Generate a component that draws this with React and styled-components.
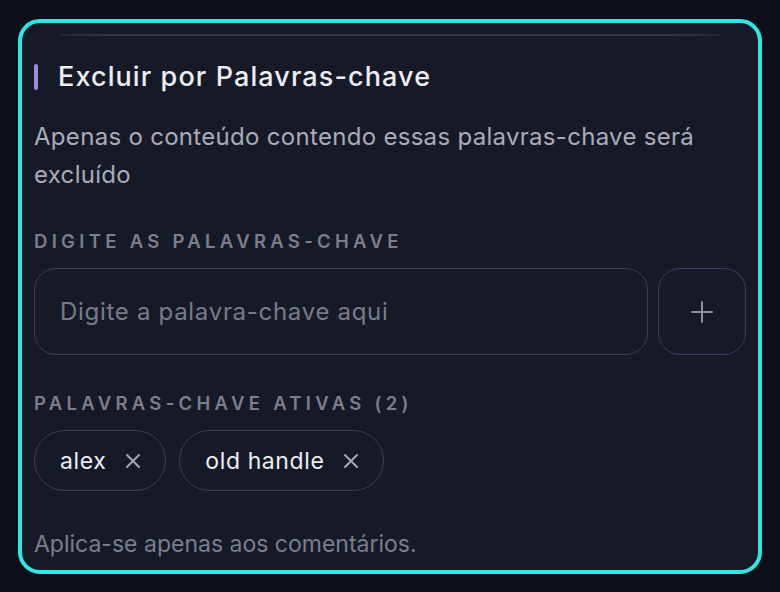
import React from 'react';
import styled, { createGlobalStyle } from 'styled-components';

const GlobalStyle = createGlobalStyle`
  html, body {
    margin: 0;
    padding: 0;
    background: #0c0f17;
  }
  body {
    font-family: Inter, "Noto Sans", "Liberation Sans", sans-serif;
    -webkit-font-smoothing: antialiased;
  }
`;

const Page = styled.div`
  width: 780px;
  height: 592px;
  padding: 19px 18px 0;
  box-sizing: border-box;
`;

const Card = styled.section`
  height: 555px;
  box-sizing: border-box;
  border: 4px solid #2ee6e6;
  border-radius: 22px;
  background: #161a27;
  padding: 11px 12px 0;
  display: flex;
  flex-direction: column;
`;

const Divider = styled.div`
  height: 2px;
  margin: 0 26px;
  background: linear-gradient(90deg, #242836 0%, #343846 8%, #343846 92%, #242836 100%);
`;

const TitleRow = styled.div`
  display: flex;
  align-items: center;
  gap: 20px;
  margin-top: 25px;
  height: 32px;
`;

const Accent = styled.span`
  width: 4px;
  height: 26px;
  border-radius: 2px;
  background: #9b8ade;
`;

const Title = styled.h2`
  margin: 0;
  font-size: 27px;
  line-height: 32px;
  font-weight: 500;
  letter-spacing: 1.1px;
  color: #eceef5;
`;

const Description = styled.p`
  margin: 25px 0 0;
  font-size: 24px;
  line-height: 38px;
  letter-spacing: 0.3px;
  color: #a9acb9;
`;

const Label = styled.div`
  margin-top: ${props => props.$top}px;
  font-size: 18.5px;
  line-height: 20px;
  font-weight: 600;
  letter-spacing: 4.3px;
  text-transform: uppercase;
  color: #7b7e8d;
`;

const InputRow = styled.div`
  display: flex;
  gap: 10px;
  margin-top: 17px;
`;

const Input = styled.input`
  flex: 1;
  height: 87px;
  box-sizing: border-box;
  border: 1.5px solid #3b3e4b;
  border-radius: 22px;
  background: transparent;
  padding: 0 25px;
  font-family: inherit;
  font-size: 24px;
  letter-spacing: 0.7px;
  color: #e6e8f0;
  outline: none;

  &::placeholder {
    color: #787b89;
  }
`;

const AddButton = styled.button`
  width: 88px;
  height: 87px;
  box-sizing: border-box;
  border: 1.5px solid #3d3866;
  border-radius: 22px;
  background: transparent;
  display: flex;
  align-items: center;
  justify-content: center;
  color: #8d8fa0;
  cursor: pointer;
`;

const Chips = styled.div`
  display: flex;
  gap: 13px;
  margin-top: 17px;
`;

const Chip = styled.div`
  height: 61px;
  box-sizing: border-box;
  border: 1.5px solid #3b3e4b;
  border-radius: 31px;
  padding: 0 24px 0 25px;
  display: flex;
  align-items: center;
  gap: 19px;
  font-size: 23px;
  letter-spacing: 0.6px;
  color: #eceef5;
`;

const RemoveIcon = styled.svg`
  color: #a3a6b4;
  cursor: pointer;
`;

const Footer = styled.div`
  margin-top: 41px;
  font-size: 23px;
  line-height: 24px;
  color: #7b7e8d;
`;

const PlusIcon = () => (
  <svg width="22" height="22" viewBox="0 0 22 22" fill="none">
    <path d="M11 1v20M1 11h20" stroke="currentColor" strokeWidth="2" strokeLinecap="round" />
  </svg>
);

const XIcon = () => (
  <RemoveIcon width="16" height="16" viewBox="0 0 16 16" fill="none">
    <path d="M2 2l12 12M14 2L2 14" stroke="currentColor" strokeWidth="2" strokeLinecap="round" />
  </RemoveIcon>
);

const keywords = ['alex', 'old handle'];

const App = () => (
  <Page>
    <GlobalStyle />
    <Card>
      <Divider />
      <TitleRow>
        <Accent />
        <Title>Excluir por Palavras-chave</Title>
      </TitleRow>
      <Description>
        Apenas o conteúdo contendo essas palavras-chave será excluído
      </Description>
      <Label $top={37}>Digite as palavras-chave</Label>
      <InputRow>
        <Input placeholder="Digite a palavra-chave aqui" />
        <AddButton aria-label="Adicionar">
          <PlusIcon />
        </AddButton>
      </InputRow>
      <Label $top={38}>{`Palavras-chave ativas (${keywords.length})`}</Label>
      <Chips>
        {keywords.map(word => (
          <Chip key={word}>
            {word}
            <XIcon />
          </Chip>
        ))}
      </Chips>
      <Footer>Aplica-se apenas aos comentários.</Footer>
    </Card>
  </Page>
);

export default App;
